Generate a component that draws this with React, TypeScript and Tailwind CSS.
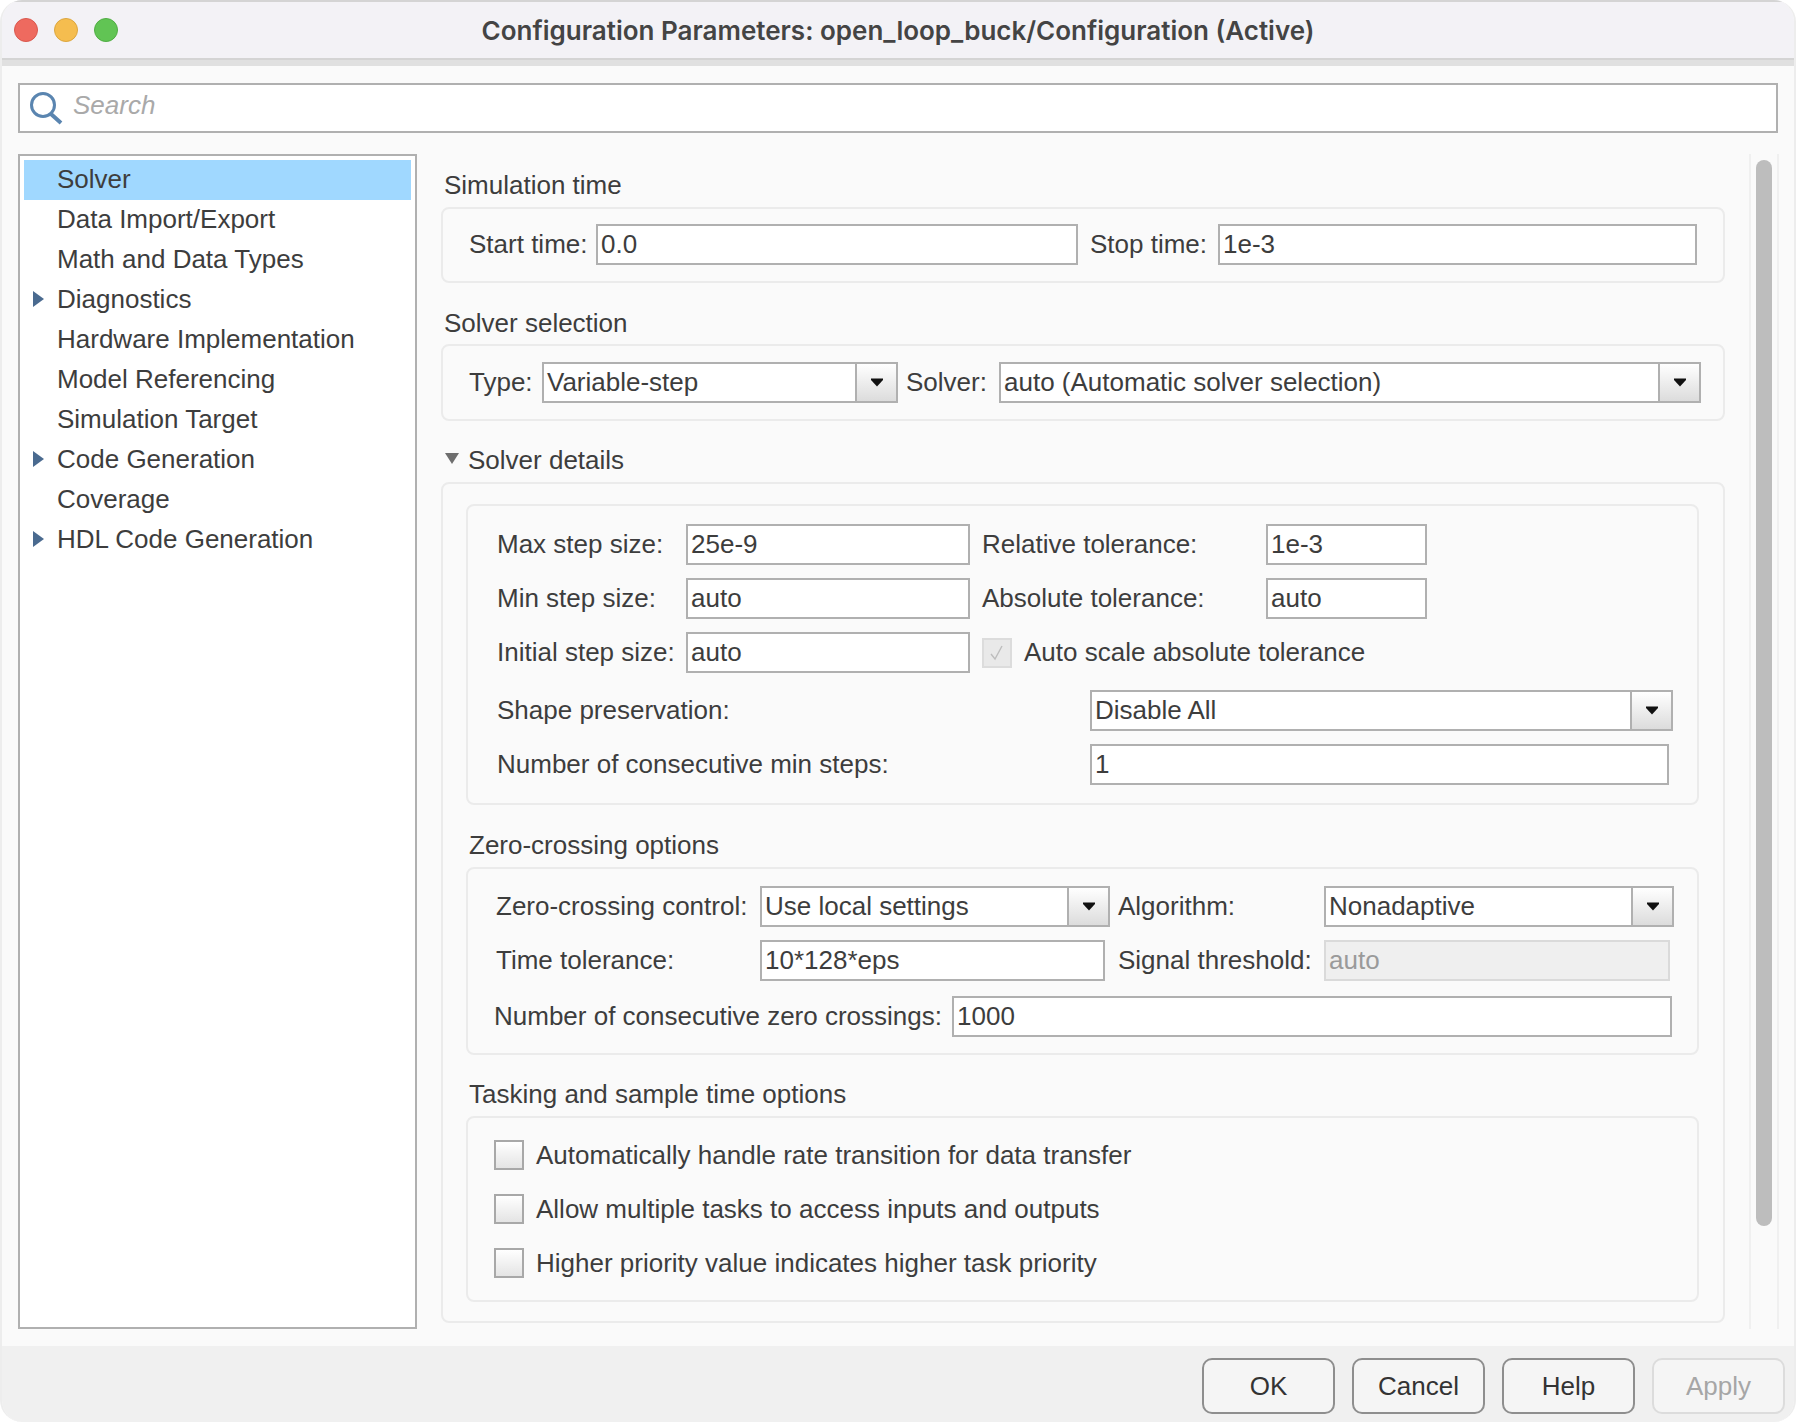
import React from 'react';

const sectionTitle = 'h-[30px] leading-[30px] pl-[3px]';
const group = 'border-2 border-[#ebebeb] rounded-[8px]';

const treeItems = [
    { name: 'Solver', selected: true },
    { name: 'Data Import/Export' },
    { name: 'Math and Data Types' },
    { name: 'Diagnostics', arrow: true },
    { name: 'Hardware Implementation' },
    { name: 'Model Referencing' },
    { name: 'Simulation Target' },
    { name: 'Code Generation', arrow: true },
    { name: 'Coverage' },
    { name: 'HDL Code Generation', arrow: true },
];

function Field({ value, className = '' }: { value: string; className?: string }) {
    return (
        <div className={`h-[41px] shrink-0 border-2 border-[#b0b0b0] bg-white pl-[3px] leading-[37px] ${className}`}>
            {value}
        </div>
    );
}

function Combo({ value, className = '' }: { value: string; className?: string }) {
    return (
        <div className={`h-[41px] shrink-0 border-2 border-[#b0b0b0] bg-white flex ${className}`}>
            <div className="flex-1 pl-[3px] leading-[37px]">{value}</div>
            <div className="w-[41px] border-l-2 border-[#b0b0b0] bg-gradient-to-b from-white to-[#dcdcdc] flex items-center justify-center">
                <svg width="14" height="9" viewBox="0 0 14 9">
                    <path d="M1 0.5H13V2L7 8.5L1 2Z" fill="#111" />
                </svg>
            </div>
        </div>
    );
}

function Check({ label, disabled }: { label: string; disabled?: boolean }) {
    return (
        <div className="flex items-center h-[30px] gap-[12px]">
            {disabled ? (
                <div className="w-[30px] h-[30px] border-2 border-[#dcdcdc] bg-[#e9e9e9] flex items-center justify-center">
                    <svg width="18" height="18" viewBox="0 0 18 18" fill="none">
                        <path d="M3 10L7 15L14 2" stroke="#bdbdbd" strokeWidth="1.4" />
                    </svg>
                </div>
            ) : (
                <div className="w-[30px] h-[30px] border-2 border-[#a8a8a8] bg-gradient-to-b from-white to-[#e4e4e4]" />
            )}
            <span>{label}</span>
        </div>
    );
}

function FooterButton({ label, disabled }: { label: string; disabled?: boolean }) {
    return (
        <div
            className={`w-[133px] h-[56px] rounded-[10px] border-2 flex items-center justify-center bg-[#f5f5f5] ${
                disabled ? 'border-[#dcdcdc] text-[#a6a6a6]' : 'border-[#8e8e8e] text-[#333]'
            }`}
        >
            {label}
        </div>
    );
}

export default function App() {
    return (
        <div className="w-[1796px] h-[1422px] bg-white font-['Liberation_Sans',Arial,sans-serif] text-[26px] text-[#3d3d3d]">
            <div className="w-full h-full rounded-t-[22px] rounded-b-[22px] overflow-hidden flex flex-col border-x-2 border-[#ededed] bg-[#fafafa]">
                {/* title bar */}
                <div className="h-[60px] shrink-0 bg-[#f3f2f6] border-t-2 border-b-2 border-[#d4d4d4] grid grid-cols-[1fr_auto_1fr] items-center">
                    <div className="flex gap-[16px] pl-[12px]">
                        <div className="w-[24px] h-[24px] rounded-full bg-[#ee6a5f] border border-[#d9584e]" />
                        <div className="w-[24px] h-[24px] rounded-full bg-[#f5bd4f] border border-[#dba63f]" />
                        <div className="w-[24px] h-[24px] rounded-full bg-[#61c454] border border-[#50ad44]" />
                    </div>
                    <div className="font-['Inter',sans-serif] font-semibold text-[#444] text-[26px]">
                        Configuration Parameters: open_loop_buck/Configuration (Active)
                    </div>
                    <div />
                </div>
                <div className="h-[6px] shrink-0 bg-[#e0e0e0]" />

                {/* search */}
                <div className="h-[50px] shrink-0 mt-[17px] ml-[16px] w-[1760px] border-2 border-[#b0b0b0] bg-white flex items-center">
                    <svg className="ml-[8px] shrink-0" width="36" height="36" viewBox="0 0 36 36" fill="none">
                        <circle cx="15" cy="15" r="11.5" stroke="#5a85b0" strokeWidth="3" />
                        <path d="M23 24L33 33" stroke="#5a85b0" strokeWidth="4" />
                    </svg>
                    <span className="ml-[9px] italic text-[#a9a9a9] -mt-[6px]">Search</span>
                </div>

                {/* main */}
                <div className="flex mt-[21px] h-[1175px] shrink-0">
                    <div className="ml-[16px] w-[399px] shrink-0 border-2 border-[#b0b0b0] bg-white p-[4px]">
                        {treeItems.map(item => (
                            <div
                                key={item.name}
                                className={`h-[40px] flex items-center ${item.selected ? 'bg-[#a0d8ff]' : ''}`}
                            >
                                <div className="w-[33px] pl-[9px] shrink-0">
                                    {item.arrow && (
                                        <svg width="11" height="16" viewBox="0 0 11 16" className="-mt-[2px]">
                                            <path d="M0 0L11 8L0 16Z" fill="#4a6a8f" />
                                        </svg>
                                    )}
                                </div>
                                <span className="-mt-[1px]">{item.name}</span>
                            </div>
                        ))}
                    </div>

                    <div className="ml-[24px] w-[1284px] shrink-0 pt-[16px]">
                        <div className={sectionTitle}>Simulation time</div>
                        <div className={`${group} mt-[7px] h-[76px] pt-[15px] pl-[26px] flex`}>
                            <div className="w-[127px] leading-[41px]">Start time:</div>
                            <Field value="0.0" className="w-[482px]" />
                            <div className="w-[140px] pl-[12px] leading-[41px]">Stop time:</div>
                            <Field value="1e-3" className="w-[479px]" />
                        </div>

                        <div className={`${sectionTitle} mt-[25px]`}>Solver selection</div>
                        <div className={`${group} mt-[6px] h-[77px] pt-[16px] pl-[26px] flex`}>
                            <div className="w-[73px] leading-[41px]">Type:</div>
                            <Combo value="Variable-step" className="w-[356px]" />
                            <div className="w-[101px] pl-[8px] leading-[41px]">Solver:</div>
                            <Combo value="auto (Automatic solver selection)" className="w-[702px]" />
                        </div>

                        <div className="h-[30px] leading-[30px] mt-[24px] pl-[4px] flex items-center gap-[9px]">
                            <svg width="14" height="11" viewBox="0 0 14 11" className="-mt-[3px]">
                                <path d="M0 0H14L7 11Z" fill="#6e6e6e" />
                            </svg>
                            <span>Solver details</span>
                        </div>
                        <div className={`${group} mt-[7px] pt-[20px] pl-[23px] pr-[24px] pb-[19px]`}>
                            <div className={`${group} pt-[18px] pb-[18px] pl-[29px] flex flex-col gap-[13px]`}>
                                <div className="flex">
                                    <div className="w-[189px] leading-[41px]">Max step size:</div>
                                    <Field value="25e-9" className="w-[284px]" />
                                    <div className="w-[296px] pl-[12px] leading-[41px]">Relative tolerance:</div>
                                    <Field value="1e-3" className="w-[161px]" />
                                </div>
                                <div className="flex">
                                    <div className="w-[189px] leading-[41px]">Min step size:</div>
                                    <Field value="auto" className="w-[284px]" />
                                    <div className="w-[296px] pl-[12px] leading-[41px]">Absolute tolerance:</div>
                                    <Field value="auto" className="w-[161px]" />
                                </div>
                                <div className="flex items-center">
                                    <div className="w-[189px] leading-[41px]">Initial step size:</div>
                                    <Field value="auto" className="w-[284px]" />
                                    <div className="pl-[12px]">
                                        <Check label="Auto scale absolute tolerance" disabled />
                                    </div>
                                </div>
                                <div className="flex mt-[4px]">
                                    <div className="w-[593px] leading-[41px]">Shape preservation:</div>
                                    <Combo value="Disable All" className="w-[583px]" />
                                </div>
                                <div className="flex">
                                    <div className="w-[593px] leading-[41px]">Number of consecutive min steps:</div>
                                    <Field value="1" className="w-[579px]" />
                                </div>
                            </div>

                            <div className={`${sectionTitle} mt-[25px]`}>Zero-crossing options</div>
                            <div className={`${group} mt-[7px] pt-[17px] pb-[16px] pl-[28px] h-[188px]`}>
                                <div className="flex">
                                    <div className="w-[264px] leading-[41px]">Zero-crossing control:</div>
                                    <Combo value="Use local settings" className="w-[350px]" />
                                    <div className="w-[214px] pl-[8px] leading-[41px]">Algorithm:</div>
                                    <Combo value="Nonadaptive" className="w-[350px]" />
                                </div>
                                <div className="flex mt-[13px]">
                                    <div className="w-[264px] leading-[41px]">Time tolerance:</div>
                                    <Field value="10*128*eps" className="w-[345px]" />
                                    <div className="w-[219px] pl-[13px] leading-[41px]">Signal threshold:</div>
                                    <div className="h-[41px] w-[346px] border-2 border-[#dadada] bg-[#efefef] pl-[3px] leading-[37px] text-[#9a9a9a]">
                                        auto
                                    </div>
                                </div>
                                <div className="flex mt-[15px] -ml-[2px]">
                                    <div className="w-[458px] leading-[41px]">Number of consecutive zero crossings:</div>
                                    <Field value="1000" className="w-[720px]" />
                                </div>
                            </div>

                            <div className={`${sectionTitle} mt-[24px]`}>Tasking and sample time options</div>
                            <div className={`${group} mt-[7px] pt-[22px] pb-[22px] pl-[26px] flex flex-col gap-[24px]`}>
                                <Check label="Automatically handle rate transition for data transfer" />
                                <Check label="Allow multiple tasks to access inputs and outputs" />
                                <Check label="Higher priority value indicates higher task priority" />
                            </div>
                        </div>
                    </div>

                    {/* scrollbar */}
                    <div className="ml-[24px] w-[30px] shrink-0 border-x-2 border-[#f0f0f0] pt-[6px] pl-[5px]">
                        <div className="w-[16px] h-[1066px] rounded-full bg-[#bdbdbd]" />
                    </div>
                </div>

                {/* footer */}
                <div className="flex-1 mt-[17px] bg-[#f0f0f0] flex justify-end items-start gap-[17px] pt-[12px] pr-[9px] text-[#333]">
                    <FooterButton label="OK" />
                    <FooterButton label="Cancel" />
                    <FooterButton label="Help" />
                    <FooterButton label="Apply" disabled />
                </div>
            </div>
        </div>
    );
}
